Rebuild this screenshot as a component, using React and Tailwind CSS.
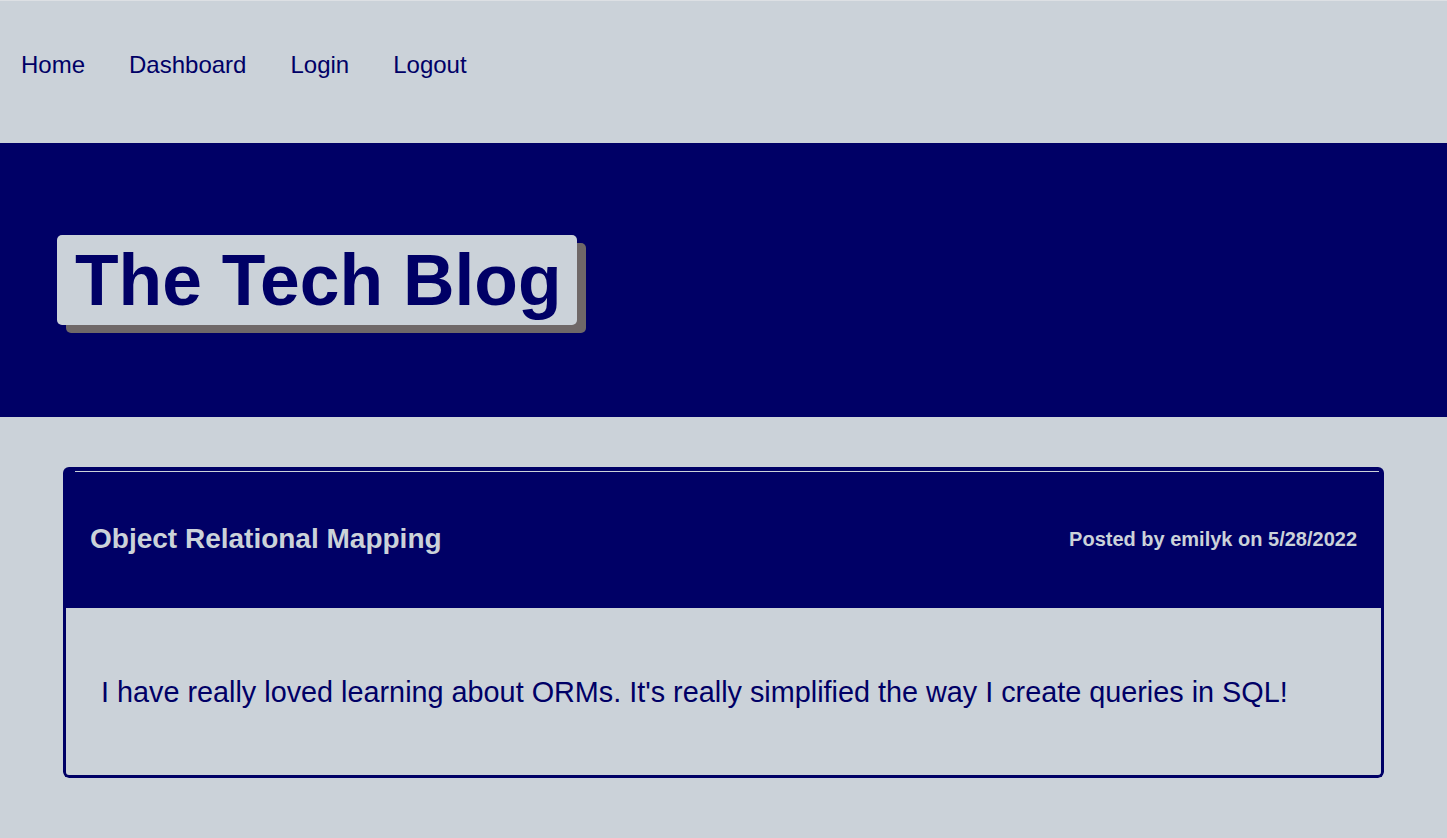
export default function App() {
  const navLinks = ["Home", "Dashboard", "Login", "Logout"];

  return (
    <div className="min-h-[838px] bg-[#cbd2d9] font-['Liberation_Sans',Arial,sans-serif] text-[#000066]">
      {/* navbar */}
      <nav className="h-[143px] border-t border-[#dde0e4] flex items-center pl-[21px] gap-[44px] pb-[14px]">
        {navLinks.map((l) => (
          <a key={l} href="#" className="text-[24px] leading-none">
            {l}
          </a>
        ))}
      </nav>

      {/* hero */}
      <header className="h-[274px] bg-[#000066] flex items-center px-[57px]">
        <h1 className="bg-[#cbd2d9] rounded-[5px] pl-[18px] pr-[15px] py-[4px] text-[71.4px] font-bold leading-[82px] shadow-[9px_8px_0_#6f6868]">
          The Tech Blog
        </h1>
      </header>

      {/* posts */}
      <main className="px-[63px] pt-[50px] pb-[60px]">
        <article className="rounded-[6px] overflow-hidden">
          <div className="bg-[#000066] h-[141px] flex flex-col">
            <div className="h-px bg-[#cbd2d9] mt-[4px] ml-[12px] mr-[5px]" />
            <div className="flex-1 flex items-center justify-between px-[27px] pb-[3px] text-[#cbd2d9] font-bold">
              <h2 className="text-[28px]">Object Relational Mapping</h2>
              <p className="text-[20px]">Posted by emilyk on 5/28/2022</p>
            </div>
          </div>
          <div className="border-[3px] border-t-0 border-[#000066] rounded-b-[6px] h-[170px] flex items-center px-[35px] pt-[3px]">
            <p className="text-[28.8px]">
              I have really loved learning about ORMs. It's really simplified the way I create queries in SQL!
            </p>
          </div>
        </article>
      </main>
    </div>
  );
}
